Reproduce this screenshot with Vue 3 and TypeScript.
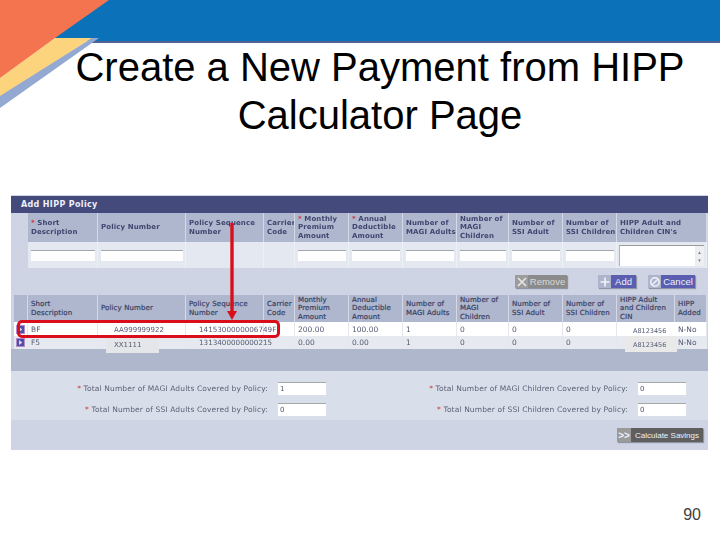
<script setup lang="ts">
interface Head { t: string[]; req?: boolean; input?: boolean }
const top: Head[] = [
  { t: ['Short', 'Description'], req: true, input: true },
  { t: ['Policy Number'], input: true },
  { t: ['Policy Sequence', 'Number'] },
  { t: ['Carrier', 'Code'] },
  { t: ['Monthly', 'Premium', 'Amount'], req: true, input: true },
  { t: ['Annual', 'Deductible', 'Amount'], req: true, input: true },
  { t: ['Number of', 'MAGI Adults'], input: true },
  { t: ['Number of', 'MAGI', 'Children'], input: true },
  { t: ['Number of', 'SSI Adult'], input: true },
  { t: ['Number of', 'SSI Children'], input: true },
  { t: ['HIPP Adult and', "Children CIN's"] },
]
const bottom: string[][] = [
  [''],
  ['Short', 'Description'], ['Policy Number'], ['Policy Sequence', 'Number'], ['Carrier', 'Code'],
  ['Monthly', 'Premium', 'Amount'], ['Annual', 'Deductible', 'Amount'], ['Number of', 'MAGI Adults'],
  ['Number of', 'MAGI', 'Children'], ['Number of', 'SSI Adult'], ['Number of', 'SSI Children'],
  ['HIPP Adult', 'and Children', 'CIN'], ['HIPP', 'Added'],
]
const rows: string[][] = [
  ['BF', '', '1415300000006749F', '', '200.00', '100.00', '1', '0', '0', '0', '', 'N-No'],
  ['F5', '', '1313400000000215', '', '0.00', '0.00', '1', '0', '0', '0', '', 'N-No'],
]
const totals = [
  ['Total Number of MAGI Adults Covered by Policy:', '1', 'Total Number of MAGI Children Covered by Policy:', '0'],
  ['Total Number of SSI Adults Covered by Policy:', '0', 'Total Number of SSI Children Covered by Policy:', '0'],
]
</script>

<template>
  <div class="slide">
    <svg class="banner" width="720" height="112" viewBox="0 0 720 112" aria-hidden="true">
      <rect x="55" y="0" width="665" height="41" fill="#0b72b9" />
      <rect x="92" y="41" width="628" height="2" fill="#4f6394" />
      <polygon points="99,38 0,108 0,95 92,38" fill="#93a9d2" />
      <polygon points="55,38 92,38 0,96 0,78" fill="#fcd47e" />
      <polygon points="0,0 109,0 55,38 0,78" fill="#f4744f" />
    </svg>

    <h1 class="title">Create a New Payment from HIPP<br />Calculator Page</h1>

    <section class="panel">
      <header class="panel-head">Add HIPP Policy</header>

      <div class="grid top-grid">
        <div v-for="(h, i) in top" :key="i" class="th">
          <div>
            <span v-for="(l, j) in h.t" :key="j" class="line"><span v-if="h.req && j === 0" class="req">* </span>{{ l }}</span>
          </div>
        </div>
        <div v-for="(h, i) in top" :key="'c' + i" class="td-input">
          <input v-if="h.input" class="field" type="text" />
          <div v-else-if="i === 10" class="area">
            <span class="spin">▴<br />▾</span>
          </div>
        </div>
      </div>

      <div class="actions">
        <button class="btn grey remove"><span class="ico">
          <svg width="12" height="12" viewBox="0 0 12 12"><path d="M2 2l8 8M10 2l-8 8" stroke="#e8e8e8" stroke-width="1.6" /></svg>
        </span><span class="lbl">Remove</span></button>
        <button class="btn add"><span class="ico">
          <svg width="12" height="12" viewBox="0 0 12 12"><path d="M6 1.5v9M1.5 6h9" stroke="#f2f4fa" stroke-width="1.6" /></svg>
        </span><span class="lbl">Add</span></button>
        <button class="btn cancel"><span class="ico">
          <svg width="12" height="12" viewBox="0 0 12 12"><circle cx="6" cy="6" r="4.2" fill="none" stroke="#f2f4fa" stroke-width="1.5" /><path d="M3.2 8.8l5.6-5.6" stroke="#f2f4fa" stroke-width="1.4" /></svg>
        </span><span class="lbl">Cancel</span></button>
      </div>

      <div class="grid bottom-grid">
        <div v-for="(h, i) in bottom" :key="i" class="th" :class="{ soft: i > 0 }">
          <div><span v-for="(l, j) in h" :key="j" class="line">{{ l }}</span></div>
        </div>
        <template v-for="(r, ri) in rows" :key="ri">
          <div class="td icon-cell" :class="ri ? 'alt' : ''">
            <svg class="expand" width="9" height="9" viewBox="0 0 9 9" aria-hidden="true">
              <rect x="0.5" y="0.5" width="8" height="8" fill="#4f4fa6" stroke="#b48ac8" />
              <path d="M3 2l3.4 2.5L3 7z" fill="#d9d5f0" />
            </svg>
          </div>
          <div v-for="(c, ci) in r" :key="ci" class="td" :class="[ri ? 'alt' : '', ci === 2 ? 'seq' : '']">{{ c }}</div>
        </template>
      </div>

      <div class="band"></div>

      <div class="totals">
        <div v-for="(t, i) in totals" :key="i" class="total-row">
          <label class="total"><span class="req">* </span>{{ t[0] }}<input class="field small" :value="t[1]" /></label>
          <label class="total"><span class="req">* </span>{{ t[2] }}<input class="field small" :value="t[3]" /></label>
        </div>
      </div>

      <div class="foot">
        <button class="btn calc"><span class="ico">&gt;&gt;</span><span class="lbl">Calculate Savings</span></button>
      </div>

      <!-- masked values pasted over the table -->
      <span class="patch p1">AA999999922</span>
      <span class="patch p2">XX1111</span>
      <span class="patch p3">A8123456</span>
      <span class="patch p4">A8123456</span>

      <!-- red callout -->
      <span class="ring"></span>
      <svg class="arrow" width="14" height="97" viewBox="0 0 14 97" aria-hidden="true">
        <path d="M7 0V90" stroke="#d9101c" stroke-width="3.4" />
        <path d="M2 88h10l-5 9z" fill="#d9101c" />
      </svg>
    </section>

    <div class="page-no">90</div>
  </div>
</template>

<style>
html, body { margin: 0; background: #fff; }
</style>

<style scoped>
.slide {
  position: relative;
  width: 720px;
  height: 540px;
  overflow: hidden;
  background: #fff;
  font-family: "Liberation Sans", Arial, sans-serif;
  display: flex;
  flex-direction: column;
}
.banner { position: absolute; left: 0; top: 0; }
.title {
  position: relative;
  margin: 43px 0 0 42px;
  width: 676px;
  height: 152px;
  font-weight: 400;
  font-size: 40px;
  line-height: 48px;
  text-align: center;
  color: #000;
}
.panel {
  position: relative;
  margin-left: 11px;
  width: 697px;
  height: 255px;
  box-sizing: border-box;
  padding-top: 1px;
  background: #ced4e4;
  font-family: "DejaVu Sans", Verdana, sans-serif;
  color: #3d4468;
  display: flex;
  flex-direction: column;
}
.panel-head {
  height: 17px;
  background: #454a7c;
  color: #eef0f8;
  font-weight: 700;
  font-size: 8px;
  letter-spacing: 0.35px;
  line-height: 17px;
  padding-left: 10px;
}
.grid { display: grid; filter: blur(0.3px); }
.top-grid {
  margin-left: 17px;
  grid-template-columns: 70px 88px 78px 31px 54px 54px 54px 52px 54px 54px 90px;
  grid-template-rows: 29px 26px;
}
.bottom-grid {
  margin-left: 3px;
  grid-template-columns: 14px 70px 88px 78px 31px 54px 54px 54px 52px 54px 54px 58px 32px;
  grid-template-rows: 27px 14px 13px;
}
.th {
  display: flex;
  align-items: center;
  box-sizing: border-box;
  padding-left: 3px;
  background: #aeb7cd;
  border-right: 1px solid #d3d9e6;
  font-size: 7px;
  font-weight: 700;
  letter-spacing: 0.12px;
  line-height: 8.5px;
  color: #3f4670;
  overflow: hidden;
  white-space: nowrap;
}
.th.soft { font-weight: 400; color: #3a4063; -webkit-text-stroke: 0.2px #3a4063; }
.line { display: block; }
.req { color: #d2343c; }
.td-input {
  display: flex;
  align-items: center;
  justify-content: center;
  background: #e4e8f0;
  border-right: 1px solid #eef0f5;
  box-sizing: border-box;
  padding-top: 1px;
}
.field {
  width: calc(100% - 5px);
  height: 11px;
  box-sizing: border-box;
  padding: 0 2px;
  border: 0;
  border-top: 1px solid #a4a6a8;
  background: #fff;
  font: 7px "DejaVu Sans", sans-serif;
  color: #50566e;
}
.area {
  position: relative;
  width: 85px;
  height: 21px;
  box-sizing: border-box;
  background: #fff;
  border-top: 1px solid #9a9ca0;
  border-left: 1px solid #b0b2b6;
}
.spin {
  position: absolute;
  right: 0;
  top: 0;
  bottom: 0;
  width: 9px;
  background: #eceef2;
  color: #777;
  font-size: 5px;
  line-height: 8px;
  text-align: center;
  padding-top: 2px;
  box-sizing: border-box;
}
.actions {
  height: 27px;
  display: flex;
  justify-content: flex-end;
  align-items: center;
  padding: 0 13px 0 0;
  box-sizing: border-box;
  background: #ced4e4;
}
.btn {
  display: flex;
  align-items: stretch;
  padding: 0;
  border: 0;
  color: #eef0f8;
  font: 9.5px "Liberation Sans", sans-serif;
  box-shadow: 1px 1px 1px #8e93a6;
}
.ico {
  display: flex;
  align-items: center;
  justify-content: center;
  font-weight: 700;
}
.lbl { display: flex; align-items: center; justify-content: center; }
.remove { width: 52px; height: 13px; margin-right: 31px; }
.remove .ico { width: 13px; background: #9c9c9c; }
.remove .lbl { flex: 1; background: #8b8b8b; color: #d9d9d9; }
.add { width: 38px; height: 13px; margin-right: 12px; }
.add .ico { width: 13px; background: #aeb4cc; }
.add .lbl { flex: 1; background: #5b5eb0; }
.cancel { width: 47px; height: 13px; }
.cancel .ico { width: 13px; background: #aeb4cc; }
.cancel .lbl { flex: 1; background: #5b5eb0; }
.td {
  display: flex;
  align-items: center;
  box-sizing: border-box;
  padding-left: 3px;
  background: #fff;
  border-right: 1px solid #e4e7ee;
  font-size: 7.5px;
  color: #555b72;
  white-space: nowrap;
  overflow: hidden;
}
.td.alt { background: #e6e9f0; }
.td.seq {
  position: relative;
  z-index: 1;
  overflow: visible;
  padding-left: 13px;
  font-size: 7.2px;
}
.icon-cell { padding: 0 1px 0 0; justify-content: center; background: #fff; }
.band { height: 22px; background: #aeb7cc; }
.totals {
  height: 49px;
  box-sizing: border-box;
  padding-top: 11px;
  background: #d9dfea;
  display: flex;
  flex-direction: column;
  gap: 8px;
  filter: blur(0.3px);
}
.total-row { display: grid; grid-template-columns: 315px 360px; }
.total {
  display: flex;
  align-items: center;
  justify-content: flex-end;
  height: 13px;
  font-size: 7.5px;
  letter-spacing: 0.13px;
  color: #5c6176;
  white-space: pre;
}
.field.small { width: 48px; height: 13px; margin-left: 10px; }
.foot {
  flex: 1;
  display: flex;
  justify-content: flex-end;
  align-items: center;
  padding-right: 5px;
}
.calc { width: 86px; height: 14px; }
.calc .ico { width: 14px; background: #9a9a9a; font-size: 10px; }
.calc .lbl { flex: 1; background: #5f5f5f; font-size: 8px; }
.patch {
  position: absolute;
  box-sizing: border-box;
  font-size: 7px;
  color: #555b72;
  white-space: nowrap;
  filter: blur(0.3px);
}
.p1 { left: 96px; top: 127px; width: 53px; height: 14px; padding: 4px 0 0 7px; background: #fff; }
.p2 { left: 95px; top: 141px; width: 53px; height: 17px; padding: 5px 0 0 8px; background: #e4e6ea; }
.p3 { left: 614px; top: 127px; width: 52px; height: 14px; padding: 5px 0 0 8px; font-size: 6.5px; background: #fff; }
.p4 { left: 614px; top: 141px; width: 52px; height: 16px; padding: 5px 0 0 8px; font-size: 6.5px; background: #e9e9ea; }
.ring {
  position: absolute;
  left: 6px;
  top: 125px;
  width: 263px;
  height: 18px;
  box-sizing: border-box;
  border: 3px solid #dc0d1a;
  border-radius: 5px;
}
.arrow { position: absolute; left: 214px; top: 28px; }
.page-no {
  position: absolute;
  right: 19px;
  top: 506px;
  font-size: 16px;
  color: #404040;
}
</style>
